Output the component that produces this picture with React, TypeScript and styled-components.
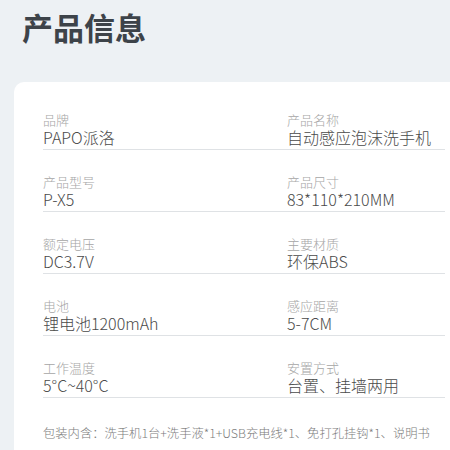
import styled, { createGlobalStyle } from 'styled-components';

const GlobalStyle = createGlobalStyle`
  html, body {
    margin: 0;
    padding: 0;
    background: #edf1f4;
    overflow: hidden;
  }
  body {
    font-family: "Noto Sans CJK SC", "Noto Sans", sans-serif;
  }
`;

const Page = styled.div`
  width: 450px;
  height: 450px;
  overflow: hidden;
`;

const Title = styled.h1`
  margin: 0;
  padding: 7px 0 0 22px;
  font-size: 31px;
  line-height: 40px;
  font-weight: 700;
  color: #3d4349;
`;

const Card = styled.div`
  margin: 35px 0 0 14px;
  padding: 6px 5px 40px 29px;
  background: #ffffff;
  border-radius: 10px 0 0 10px;
`;

const Grid = styled.div`
  display: grid;
  grid-template-columns: 244px 1fr;
`;

const Cell = styled.div`
  padding: 23px 0 2px 0;
  border-bottom: 1px solid #dfe2e5;
`;

const Label = styled.div`
  font-size: 13px;
  line-height: 17px;
  color: #a6a6a6;
  font-weight: 300;
`;

const Value = styled.div`
  font-size: 16px;
  line-height: 19px;
  color: #4a4a4a;
  font-weight: 300;
`;

const Note = styled.div`
  margin-top: 26px;
  font-size: 12.3px;
  line-height: 18px;
  color: #7c7c7c;
  font-weight: 300;
  white-space: nowrap;
`;

const specs = [
  ['品牌', 'PAPO派洛'],
  ['产品名称', '自动感应泡沫洗手机'],
  ['产品型号', 'P-X5'],
  ['产品尺寸', '83*110*210MM'],
  ['额定电压', 'DC3.7V'],
  ['主要材质', '环保ABS'],
  ['电池', '锂电池1200mAh'],
  ['感应距离', '5-7CM'],
  ['工作温度', '5°C~40°C'],
  ['安置方式', '台置、挂墙两用'],
];

const App = () => {
  return (
    <Page>
      <GlobalStyle />
      <Title>产品信息</Title>
      <Card>
        <Grid>
          {specs.map(([label, value]) => (
            <Cell key={label}>
              <Label>{label}</Label>
              <Value>{value}</Value>
            </Cell>
          ))}
        </Grid>
        <Note>包装内含：洗手机1台+洗手液*1+USB充电线*1、免打孔挂钩*1、说明书</Note>
      </Card>
    </Page>
  );
};

export default App;
